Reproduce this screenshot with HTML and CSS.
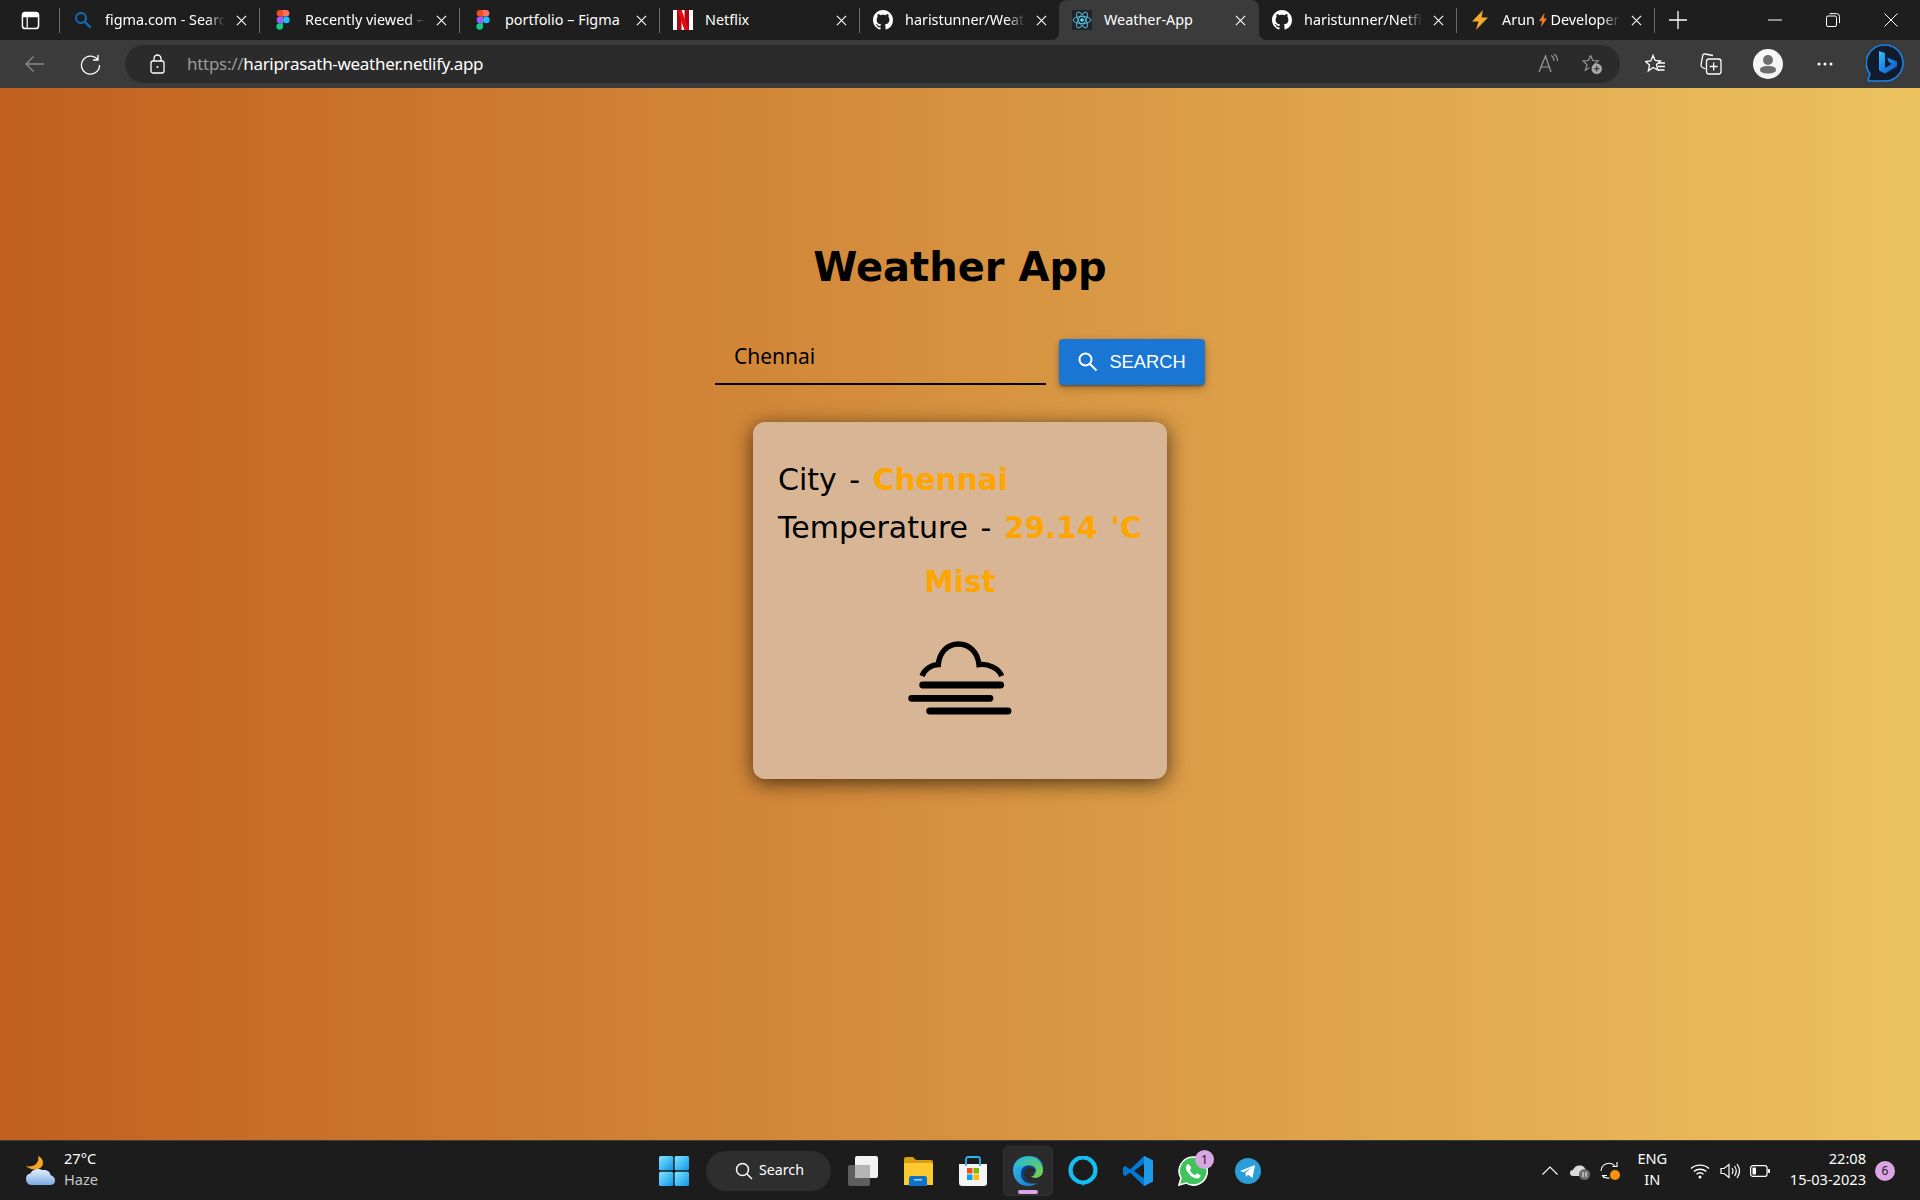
FILE: index.html
```html
<!DOCTYPE html>
<html lang="en">
<head>
<meta charset="utf-8">
<title>Weather-App</title>
<link rel="stylesheet" href="styles.css">
</head>
<body>
<header class="browser">
  <div class="tabstrip">
    <div class="strip-start">
      <svg class="ico-sidebar" viewBox="0 0 20 20"><rect x="1.5" y="1.5" width="17" height="17" rx="3" fill="none" stroke="#fff" stroke-width="1.6"/><path d="M2 6h16V4.500a2.500 2.500 0 0 0-2.500-2.500h-11a2.500 2.500 0 0 0-2.500 2.500zM6.500 6v12" fill="#fff" stroke="#fff" stroke-width="1.300"/></svg>
    </div>
    <div class="tab">
      <svg class="fav" viewBox="0 0 20 20"><circle cx="8" cy="8" r="5" fill="none" stroke="#0f6cbd" stroke-width="2"/><path d="M12 12l5 5" stroke="#0f6cbd" stroke-width="2.200" stroke-linecap="round"/></svg>
      <span class="tab-title">figma.com - Search</span>
      <svg class="close" viewBox="0 0 12 12"><path d="M1 1l10 10M11 1L1 11"/></svg>
    </div>
    <div class="tab">
      <svg class="fav" viewBox="0 0 20 20"><path d="M10 0H7a3.300 3.300 0 0 0 0 6.600h3z" fill="#f24e1e"/><path d="M10 0h3a3.300 3.300 0 0 1 0 6.600h-3z" fill="#ff7262"/><path d="M10 6.600H7a3.300 3.300 0 0 0 0 6.600h3z" fill="#a259ff"/><circle cx="13.300" cy="9.900" r="3.300" fill="#1abcfe"/><path d="M7 13.200h3v3.300a3.300 3.300 0 1 1-3-3.300z" fill="#0acf83"/></svg>
      <span class="tab-title">Recently viewed – Figma</span>
      <svg class="close" viewBox="0 0 12 12"><path d="M1 1l10 10M11 1L1 11"/></svg>
    </div>
    <div class="tab">
      <svg class="fav" viewBox="0 0 20 20"><path d="M10 0H7a3.300 3.300 0 0 0 0 6.600h3z" fill="#f24e1e"/><path d="M10 0h3a3.300 3.300 0 0 1 0 6.600h-3z" fill="#ff7262"/><path d="M10 6.600H7a3.300 3.300 0 0 0 0 6.600h3z" fill="#a259ff"/><circle cx="13.300" cy="9.900" r="3.300" fill="#1abcfe"/><path d="M7 13.200h3v3.300a3.300 3.300 0 1 1-3-3.300z" fill="#0acf83"/></svg>
      <span class="tab-title tab-title-full">portfolio – Figma</span>
      <svg class="close" viewBox="0 0 12 12"><path d="M1 1l10 10M11 1L1 11"/></svg>
    </div>
    <div class="tab">
      <svg class="fav" viewBox="0 0 20 20"><rect width="20" height="20" fill="#fff"/><path d="M4 0h4.500v20H4z" fill="#b1060f"/><path d="M11.500 0H16v20h-4.500z" fill="#b1060f"/><path d="M4 0h4.500l7.500 20h-4.500z" fill="#e50914"/></svg>
      <span class="tab-title tab-title-full">Netflix</span>
      <svg class="close" viewBox="0 0 12 12"><path d="M1 1l10 10M11 1L1 11"/></svg>
    </div>
    <div class="tab tab-nosep">
      <svg class="fav" viewBox="0 0 16 16"><path fill="#fff" d="M8 0C3.580 0 0 3.580 0 8c0 3.540 2.290 6.530 5.470 7.590.4.070.55-.17.55-.38 0-.19-.01-.82-.01-1.490-2.010.37-2.530-.49-2.690-.94-.09-.23-.48-.94-.82-1.130-.28-.15-.68-.52-.01-.53.63-.01 1.080.58 1.230.82.72 1.210 1.870.87 2.330.66.070-.52.28-.87.51-1.070-1.780-.2-3.640-.89-3.640-3.950 0-.87.31-1.590.82-2.150-.08-.2-.36-1.020.08-2.120 0 0 .67-.21 2.200.82.64-.18 1.320-.27 2-.27.68 0 1.360.09 2 .27 1.530-1.040 2.200-.82 2.200-.82.44 1.100.16 1.920.08 2.120.51.56.82 1.270.82 2.150 0 3.070-1.870 3.750-3.650 3.950.29.25.54.73.54 1.480 0 1.070-.01 1.930-.01 2.200 0 .21.15.46.55.38A8.013 8.013 0 0 0 16 8c0-4.420-3.580-8-8-8z"/></svg>
      <span class="tab-title">haristunner/Weather-App</span>
      <svg class="close" viewBox="0 0 12 12"><path d="M1 1l10 10M11 1L1 11"/></svg>
    </div>
    <div class="tab tab-active">
      <svg class="fav" viewBox="0 0 20 20"><rect width="20" height="20" rx="1" fill="#20232a"/><g fill="none" stroke="#61dafb" stroke-width=".8"><ellipse cx="10" cy="10" rx="9" ry="3.500"/><ellipse cx="10" cy="10" rx="9" ry="3.500" transform="rotate(60 10 10)"/><ellipse cx="10" cy="10" rx="9" ry="3.500" transform="rotate(120 10 10)"/></g><circle cx="10" cy="10" r="1.800" fill="#61dafb"/></svg>
      <span class="tab-title tab-title-full">Weather-App</span>
      <svg class="close" viewBox="0 0 12 12"><path d="M1 1l10 10M11 1L1 11"/></svg>
    </div>
    <div class="tab">
      <svg class="fav" viewBox="0 0 16 16"><path fill="#fff" d="M8 0C3.580 0 0 3.580 0 8c0 3.540 2.290 6.530 5.470 7.590.4.070.55-.17.55-.38 0-.19-.01-.82-.01-1.490-2.010.37-2.530-.49-2.690-.94-.09-.23-.48-.94-.82-1.130-.28-.15-.68-.52-.01-.53.63-.01 1.080.58 1.230.82.72 1.210 1.870.87 2.330.66.070-.52.28-.87.51-1.070-1.780-.2-3.640-.89-3.640-3.950 0-.87.31-1.590.82-2.150-.08-.2-.36-1.020.08-2.120 0 0 .67-.21 2.200.82.64-.18 1.320-.27 2-.27.68 0 1.360.09 2 .27 1.530-1.040 2.200-.82 2.200-.82.44 1.100.16 1.920.08 2.120.51.56.82 1.270.82 2.150 0 3.070-1.870 3.750-3.650 3.950.29.25.54.73.54 1.480 0 1.070-.01 1.930-.01 2.200 0 .21.15.46.55.38A8.013 8.013 0 0 0 16 8c0-4.420-3.580-8-8-8z"/></svg>
      <span class="tab-title">haristunner/Netflix-Clone</span>
      <svg class="close" viewBox="0 0 12 12"><path d="M1 1l10 10M11 1L1 11"/></svg>
    </div>
    <div class="tab">
      <svg class="fav" viewBox="0 0 20 20"><path d="M13 0L2 11.500h6.500L6 20l12-12.500h-6.500z" fill="#f7a82b"/></svg>
      <span class="tab-title">Arun <svg class="bolt" viewBox="0 0 8 14"><path d="M5.500 0L0 8h3l-1 6 6-8.500H4.800z"/></svg> Developer Portfolio</span>
      <svg class="close" viewBox="0 0 12 12"><path d="M1 1l10 10M11 1L1 11"/></svg>
    </div>
    <svg class="new-tab" viewBox="0 0 18 18"><path d="M9 0v18M0 9h18"/></svg>
    <div class="window-controls">
      <svg class="win-ico" viewBox="0 0 14 14"><path d="M0 7h14"/></svg>
      <svg class="win-ico" viewBox="0 0 14 14"><rect x=".5" y="3" width="10" height="10.500" rx="1.500"/><path d="M3.500 .6h7a3 3 0 0 1 3 3v6.500"/></svg>
      <svg class="win-ico" viewBox="0 0 14 14"><path d="M.5 .5l13 13M13.500 .5l-13 13"/></svg>
    </div>
  </div>
  <div class="toolbar">
    <svg class="tool tool-back" viewBox="0 0 21 18"><path d="M20 9H2M9.500 1.500L2 9l7.500 7.500"/></svg>
    <svg class="tool tool-reload" viewBox="0 0 21 21"><path d="M17.500 5.500A9 9 0 1 0 19.500 11M18 1v5h-5"/></svg>
    <div class="address">
      <svg class="lock" viewBox="0 0 15 20"><rect x="1" y="7" width="13" height="12" rx="2"/><path d="M4 7V4.500a3.500 3.500 0 0 1 7 0V7"/><circle cx="7.500" cy="13" r="1" fill="#fff" stroke="none"/></svg>
      <span class="url"><span class="url-scheme">https://</span>hariprasath-weather.netlify.app</span>
      <span class="address-end">
        <svg class="addr-ico" viewBox="0 0 20 20"><path d="M1 18L7.500 2 13 18M3.500 13h8M13 1.500c2 1 3 3 3 5.500M16 0c2.400 1.600 3.600 4 3.600 7" /></svg>
        <svg class="addr-ico" viewBox="0 0 21 21"><path d="M9 1.500l2.300 5.300 5.700.5-4.300 3.800 1.300 4M9 1.500L6.700 6.800l-5.700.5 4.300 3.800L3.500 17 8 14.300"/><circle cx="15.500" cy="15.500" r="5.500" fill="#a8a8a8" stroke="none"/><path d="M15.500 12.500v6M12.500 15.500h6" stroke="#2b2b2b"/></svg>
      </span>
    </div>
    <svg class="tool tool-star" viewBox="0 0 20 20"><path d="M8 1.500l2.200 5 5.300.5-4 3.500 1.200 5.500L8 13.500 3.300 17l1.200-6-4-3.500 5.300-.5zM13 9h7M13 12.500h7M12.500 16h7"/></svg>
    <svg class="tool tool-coll" viewBox="0 0 22 22"><path d="M13 2.500L5 1a2 2 0 0 0-2.300 1.600L1 12c0 1 .5 2 1.500 2.500l3 1.500"/><rect x="6.500" y="6" width="14.500" height="15" rx="2.500"/><path d="M13.700 9.500v8M9.700 13.500h8"/></svg>
    <div class="profile"><svg class="profile-ico" viewBox="0 0 30 30"><circle cx="15" cy="11" r="5" fill="#6e6e6e"/><path d="M7 21c0-3 3-4 8-4s8 1 8 4c0 2-3 3.500-8 3.500S7 23 7 21z" fill="#6e6e6e"/></svg></div>
    <svg class="tool-dots" viewBox="0 0 16 4"><circle cx="2" cy="2" r="1.500"/><circle cx="8" cy="2" r="1.500"/><circle cx="14" cy="2" r="1.500"/></svg>
    <svg class="bing" viewBox="0 0 38 40"><defs><linearGradient id="bingg" x1="0" y1="0" x2="1" y2="1"><stop offset="0" stop-color="#37bdff"/><stop offset=".5" stop-color="#1a86e8"/><stop offset="1" stop-color="#1b4fbf"/></linearGradient></defs><path d="M19 1a18 18 0 0 1 0 36H3.500c-1 0-1.500-.5-1.200-1.500L4 30A18 18 0 0 1 19 1z" fill="#101c2c" stroke="#1b84e4" stroke-width="1.600"/><path d="M13 7l6 2v15l7-4-3-1.500-2-5 10 4v5l-12 7-6-3z" fill="url(#bingg)"/></svg>
  </div>
</header>

<main class="page">
  <h1 class="title">Weather App</h1>
  <div class="search-row">
    <div class="field"><span class="field-value">Chennai</span></div>
    <button class="search-btn" type="button">
      <svg class="search-ico" viewBox="0 0 20 20"><circle cx="7.500" cy="7.500" r="6"/><path d="M12 12l6.500 6.500"/></svg>
      <span>SEARCH</span>
    </button>
  </div>
  <section class="card">
    <p class="line">City - <b class="hot">Chennai</b></p>
    <p class="line">Temperature - <b class="hot">29.14 'C</b></p>
    <p class="mist hot">Mist</p>
    <svg class="fog" viewBox="500 685 325 235"><path d="M548 796C555 776 575 763 597 762 600 725 625 700 657 700 690 700 715 725 719 762 745 758 778 772 787 796" fill="none" stroke="#000" stroke-width="16"/><path d="M550 823H784M517 863H752M571 901H806" fill="none" stroke="#000" stroke-width="20.500" stroke-linecap="round"/></svg>
  </section>
</main>

<footer class="taskbar">
  <div class="tb-left">
    <svg class="tb-weather" viewBox="0 0 30 30"><defs><linearGradient id="cl" x1="0" y1="0" x2="0" y2="1"><stop offset="0" stop-color="#e6effa"/><stop offset="1" stop-color="#7eaae6"/></linearGradient></defs><path d="M13 0c3 1 5 4 5 7 0 3-2 5-5 6-4 1-9 0-12-3 4 1 8 0 10-2 2-2 3-5 2-8z" fill="#f4a71f"/><path d="M7 29a6 6 0 0 1-1.500-11.800C7 13.500 13 11.500 17 14c5-.5 8 1.500 8.500 5C28.500 20 30 22 30 24.500c0 3-2 4.500-5 4.500z" fill="url(#cl)"/></svg>
    <div class="tb-weather-text"><span class="tb-temp">27°C</span><span class="tb-cond">Haze</span></div>
  </div>
  <div class="tb-center">
    <div class="slot slot-start"><svg class="ico-win" viewBox="0 0 30 30"><defs><linearGradient id="win" x1="0" y1="0" x2="1" y2="1"><stop offset="0" stop-color="#7fe7ff"/><stop offset="1" stop-color="#0f95e8"/></linearGradient></defs><rect width="14.300" height="14.300" rx="1.500" fill="url(#win)"/><rect x="15.700" width="14.300" height="14.300" rx="1.500" fill="url(#win)"/><rect y="15.700" width="14.300" height="14.300" rx="1.500" fill="url(#win)"/><rect x="15.700" y="15.700" width="14.300" height="14.300" rx="1.500" fill="url(#win)"/></svg></div>
    <div class="tb-search"><svg class="tb-search-ico" viewBox="0 0 18 18"><circle cx="7.500" cy="7.500" r="6"/><path d="M12 12l5 5"/></svg><span class="tb-search-label">Search</span></div>
    <div class="slot"><svg class="ico-30" viewBox="0 0 30 30"><rect y="9" width="22" height="21" rx="2" fill="#5e5e5e"/><rect x="7" width="23" height="22" rx="2" fill="#f2f2f2"/><rect x="7" y="9" width="15" height="13" fill="#b5b5b5"/></svg></div>
    <div class="slot"><svg class="ico-30" viewBox="0 0 30 30"><path d="M1 3a2 2 0 0 1 2-2h7l3 3h15a2 2 0 0 1 2 2v4H1z" fill="#d99e0f"/><path d="M1 7h27a2 2 0 0 1 2 2v20H1z" fill="#fdc92f"/><path d="M6 22a2 2 0 0 1 2-2h14a2 2 0 0 1 2 2v8H6z" fill="#0f72c9"/><rect x="11" y="23" width="8" height="1.500" fill="#9fd2f7"/></svg></div>
    <div class="slot"><svg class="ico-30" viewBox="0 0 30 30"><path d="M1 8h28v19a3 3 0 0 1-3 3H4a3 3 0 0 1-3-3z" fill="#f4f4f4"/><path d="M8 10V3a2 2 0 0 1 2-2h10a2 2 0 0 1 2 2v7" fill="none" stroke="#29b6f6" stroke-width="1.800"/><rect x="9" y="12" width="5.500" height="5.500" fill="#f25022"/><rect x="15.500" y="12" width="5.500" height="5.500" fill="#7fba00"/><rect x="9" y="18.500" width="5.500" height="5.500" fill="#00a4ef"/><rect x="15.500" y="18.500" width="5.500" height="5.500" fill="#ffb900"/></svg></div>
    <div class="slot slot-active"><svg class="ico-30" viewBox="0 0 30 30"><defs><linearGradient id="edge" x1="0" y1="0" x2="1" y2="1"><stop offset="0" stop-color="#35c1f1"/><stop offset="1" stop-color="#1470c4"/></linearGradient><linearGradient id="edge2" x1="0" y1="0" x2="1" y2="1"><stop offset="0" stop-color="#1fb8d8"/><stop offset="1" stop-color="#7fd33f"/></linearGradient></defs><path d="M15 0C7 0 0 6 0 14c0 9 6 16 15 16 4 0 7-1 9-3-8 2-16-1-16-9 0-5 4-9 9-9 5 0 6 2.500 6 5 0 2-1.500 3-3 3.500 2 1.500 7 1 9.500-2.500C31 11 30 0 15 0z" fill="url(#edge)"/><path d="M3 8C7 1 15 -1 22 2c5 3 8 8 8 13 0 3-2 5-4 6-3 1.500-6 1-8-.5 2-.5 5-2 5-5 0-3-3-6-8-6-6 0-9 3-12 -1.500z" fill="url(#edge2)"/><path d="M8 17c0-5 4-8 9-7.500 4 .5 6 3 6 5.500-1-2-3-3-6-3-3 0-6 2-6 6 0 4 3 7 8 7.500-6 1.500-11-3-11-8.500z" fill="#0c3f8a"/></svg><span class="active-pill"></span></div>
    <div class="slot"><svg class="ico-30" viewBox="0 0 30 30"><ellipse cx="15" cy="14" rx="12.500" ry="12.500" fill="none" stroke="#16bdf2" stroke-width="4.200"/><path d="M10.500 25l5.500 5v-5z" fill="#16bdf2"/></svg></div>
    <div class="slot"><svg class="ico-30" viewBox="0 0 30 30"><path d="M21 0l9 4.500v21L21 30 7 16.500 2.500 20 0 18.500V11.500L2.500 10 7 13.500z" fill="#0078d4"/><path d="M21 7.500L11 15l10 7.500z" fill="#1c1c1c"/><path d="M21 0l9 4.500v21L21 30z" fill="#1e9be8"/></svg></div>
    <div class="slot slot-badged"><svg class="ico-30" viewBox="0 0 30 30"><path d="M15 1a14 14 0 0 0-12 21L1 29l7.300-1.900A14 14 0 1 0 15 1z" fill="#3fc35b" stroke="#fff" stroke-width="1.600"/><path d="M10.500 8c-1 0-2.500 1.500-2.500 3.500 0 3 2 5.500 4 7.500s4.500 3.500 7 3.500c2.500 0 3.500-2 3.500-3 0-.5-3-2-3.500-2s-1.500 1.500-2 1.500c-1.500 0-5-3.500-5-5 0-.5 1-1 1-2s-1.500-3.500-2.500-3.500z" fill="#fff"/></svg><span class="count-badge">1</span></div>
    <div class="slot"><svg class="ico-tg" viewBox="0 0 26 26"><circle cx="13" cy="13" r="13" fill="#2a9ed8"/><path d="M5 13l15-6-2.500 13-4.500-3.200-2 2-.6-3.800 6-5.500-7.500 4.800z" fill="#fff"/></svg></div>
  </div>
  <div class="tb-tray">
    <svg class="tray-caret" viewBox="0 0 16 9"><path d="M.5 8.500L8 1l7.500 7.500"/></svg>
    <svg class="tray-ico" viewBox="0 0 20 20"><path d="M3 15a3 3 0 0 1 0-6c1-3 4-5 7-4.500 3 0 5 2 5.500 4L11 15z" fill="#d9d9d9"/><circle cx="14.500" cy="13.500" r="5.500" fill="#6b6b6b"/><path d="M13 11v5M16 11v5" stroke="#fff" stroke-width="1"/></svg>
    <svg class="tray-ico tray-sync" viewBox="0 0 20 20"><path d="M1 10a8 8 0 0 1 14-5M17 1v4.500h-4.500M4 17l-1.500-2.500H7M2.500 14.500c1.500 2 4 3 7 2.500" fill="none" stroke="#fff" stroke-width="1.100"/><circle cx="15" cy="14" r="5" fill="#f7930e"/></svg>
    <div class="tray-lang"><span>ENG</span><span>IN</span></div>
    <svg class="tray-ico tray-wifi" viewBox="0 0 20 16"><path d="M1 5.500c5-4.500 13-4.500 18 0M3.800 8.500c3.500-3 9-3 12.500 0M6.500 11.300c2-1.700 5-1.700 7 0" fill="none" stroke="#fff" stroke-width="1.400"/><circle cx="10" cy="14" r="1.500" fill="#fff"/></svg>
    <svg class="tray-ico tray-vol" viewBox="0 0 20 16"><path d="M1 5.500h3L9 1.500v13L4 10.500H1zM12 5c1.300 2 1.300 4 0 6M14.500 3c2.300 3.200 2.300 6.800 0 10M17 1c3.200 4.500 3.200 9.500 0 14" fill="none" stroke="#fff" stroke-width="1.200"/></svg>
    <svg class="tray-ico tray-batt" viewBox="0 0 20 12"><rect x=".6" y=".6" width="16.500" height="10.800" rx="2.500" fill="none" stroke="#fff" stroke-width="1.200"/><rect x="2.500" y="2.500" width="3.500" height="7" rx=".8" fill="#fff"/><rect x="18" y="4" width="2" height="4" rx=".8" fill="#fff"/></svg>
    <div class="tray-clock"><span>22:08</span><span>15-03-2023</span></div>
    <span class="notif">6</span>
  </div>
</footer>
</body>
</html>
```
FILE: styles.css
```css
* { box-sizing: border-box; }
html, body { margin: 0; height: 100%; }
body {
  width: 1920px;
  height: 1200px;
  display: flex;
  flex-direction: column;
  overflow: hidden;
  font-family: "Noto Sans", "Liberation Sans", sans-serif;
  color: #fff;
}
svg { display: block; flex: none; }

/* browser chrome */
.browser { flex: none; height: 88px; display: flex; flex-direction: column; }
.tabstrip { height: 40px; background: #1e1e1e; display: flex; align-items: stretch; position: relative; }
.strip-start { flex: 0 0 60px; display: flex; align-items: center; padding-left: 21px; position: relative; }
.strip-start::after { content: ""; position: absolute; right: 0; top: 8px; height: 25px; width: 1px; background: #6c6c6c; }
.ico-sidebar { width: 19px; height: 19px; }
.tab {
  flex: 0 0 200px;
  min-width: 0;
  display: flex;
  align-items: center;
  padding: 0 13px;
  position: relative;
  font-size: 14.4px;
}
.tab::after { content: ""; position: absolute; right: 0; top: 8px; height: 25px; width: 1px; background: #6c6c6c; }
.tab-nosep::after { display: none; }
.tab-active::after { display: none; }
.tab-active { background: #3b3b3b; border-radius: 8px 8px 0 0; margin-left: -1px; }
.tab-active ~ .tab { flex-basis: 198px; }
.tab-active::before {
  content: ""; position: absolute; left: -8px; bottom: 0; width: 8px; height: 8px;
  background: radial-gradient(circle at 0 0, transparent 8px, #3b3b3b 8.5px);
}
.tab-active + .tab::before {
  content: ""; position: absolute; left: 0; bottom: 0; width: 8px; height: 8px;
  background: radial-gradient(circle at 100% 0, transparent 8px, #3b3b3b 8.5px);
}
.fav { width: 20px; height: 20px; margin-right: 12px; }
.tab-title {
  flex: 1;
  min-width: 0;
  margin-bottom: 2px;
  white-space: nowrap;
  overflow: hidden;
  -webkit-mask-image: linear-gradient(to right, #000 85%, transparent 100%);
  mask-image: linear-gradient(to right, #000 85%, transparent 100%);
}
.tab-title-full { -webkit-mask-image: none; mask-image: none; }
.bolt { display: inline-block; width: 8px; height: 14px; vertical-align: -2px; fill: #f47b20; }
.close { width: 11px; height: 11px; margin-left: 11px; fill: none; stroke: #fff; stroke-width: 1.200; }
.new-tab { width: 18px; height: 18px; margin: 11px 0 0 14px; fill: none; stroke: #fff; stroke-width: 1.300; }
.window-controls { margin-left: auto; display: flex; align-items: center; gap: 44px; padding-right: 22px; }
.win-ico { width: 14px; height: 14px; fill: none; stroke: #fff; stroke-width: 1; }

.toolbar { height: 48px; background: #3b3b3b; display: flex; align-items: center; padding-left: 24px; }
.tool { fill: none; stroke: #fff; stroke-width: 1.300; }
.tool-back { width: 21px; height: 18px; stroke: #8a8a8a; }
.tool-reload { width: 21px; height: 21px; margin-left: 35px; }
.address {
  flex: 0 0 1495px;
  height: 38px;
  margin-left: 24px;
  background: #2b2b2b;
  border-radius: 19px;
  display: flex;
  align-items: center;
  padding: 0 18px 0 25px;
}
.lock { width: 15px; height: 20px; fill: none; stroke: #fff; stroke-width: 1.300; }
.url { margin: 0 0 2px 22px; font-size: 17px; letter-spacing: -.3px; color: #fff; }
.url-scheme { color: #9a9a9a; }
.address-end { margin-left: auto; display: flex; align-items: center; gap: 24px; }
.addr-ico { width: 20px; height: 20px; fill: none; stroke: #9c9c9c; stroke-width: 1.200; }
.tool-star { width: 20px; height: 20px; margin-left: 25px; }
.tool-coll { width: 22px; height: 22px; margin-left: 35px; }
.profile { width: 30px; height: 30px; margin-left: 31px; border-radius: 50%; background: #f5f5f5; overflow: hidden; }
.profile-ico { width: 30px; height: 30px; }
.tool-dots { width: 16px; height: 4px; margin-left: 34px; fill: #fff; }
.bing { width: 38px; height: 40px; margin-left: 33px; }

/* page */
.page {
  flex: 1;
  background: linear-gradient(to right, #c1601f, #ecc25f);
  display: flex;
  flex-direction: column;
  align-items: center;
  color: #000;
}
.title { margin: 155px 0 0; font: bold 40px/1.2 "DejaVu Sans", sans-serif; }
.search-row { margin-top: 48px; display: flex; align-items: flex-end; gap: 13px; }
.field { width: 331px; height: 46px; border-bottom: 2px solid #000; padding: 0 0 0 19px; display: flex; align-items: center; }
.field-value { font-size: 21px; margin-bottom: 11px; }
.search-btn {
  width: 146px;
  height: 46px;
  border: 0;
  border-radius: 4px;
  background: #1976d2;
  color: #fff;
  display: flex;
  align-items: center;
  justify-content: center;
  gap: 11px;
  padding: 0 0 1px;
  font: 500 18.300px "Liberation Sans", Arial, sans-serif;
  box-shadow: 0 3px 1px -2px rgba(0,0,0,.2), 0 2px 2px rgba(0,0,0,.14), 0 1px 5px rgba(0,0,0,.12), 0 4px 10px rgba(0,0,0,.2);
}
.search-ico { width: 20px; height: 20px; fill: none; stroke: #fff; stroke-width: 2; }
.card {
  width: 414px;
  height: 357px;
  margin-top: 37px;
  padding: 34px 25px 0;
  border-radius: 12px;
  background: #d8b595;
  box-shadow: 0 4px 20px rgba(0,0,0,.65);
  font: 30px/48px "DejaVu Sans", sans-serif;
  word-spacing: 3px;
  display: flex;
  flex-direction: column;
}
.line { margin: 0; white-space: nowrap; }
.hot { color: #ffa500; font-weight: bold; font-size: 29.600px; }
.mist { margin: 6px 0 0; text-align: center; }
.fog { width: 108.33px; height: 78.33px; margin: 33px auto 0; }

/* taskbar */
.taskbar {
  flex: none;
  height: 60px;
  background: #1c1c1c;
  border-top: 1px solid #3c3c3c;
  display: flex;
  align-items: center;
  font-size: 14.600px;
}
.tb-left { flex: 0 0 649px; display: flex; align-items: center; padding-left: 25px; gap: 9px; }
.tb-weather { width: 30px; height: 30px; }
.tb-weather-text { display: flex; flex-direction: column; line-height: 21px; padding-bottom: 3px; }
.tb-cond { color: #c8c8c8; }
.tb-center { flex: 0 0 624px; display: flex; align-items: center; gap: 5px; }
.slot { width: 50px; height: 50px; display: flex; align-items: center; justify-content: center; position: relative; border-radius: 5px; border: 1px solid transparent; }
.slot-start { margin-right: 2px; }
.slot-active { background: #2b2b2b; border-color: #333; }
.active-pill { position: absolute; left: 14px; bottom: 1px; width: 20px; height: 4px; border-radius: 2px; background: #d8a6e2; }
.ico-win, .ico-30 { width: 30px; height: 30px; }
.ico-tg { width: 26px; height: 32px; }
.tb-search { width: 125px; height: 40px; margin-right: 2px; border-radius: 20px; background: #2e2e2e; display: flex; align-items: center; padding-left: 29px; gap: 6px; }
.tb-search-label { padding-bottom: 2px; font-size: 14.200px; }
.tb-search-ico { width: 18px; height: 18px; fill: none; stroke: #fff; stroke-width: 1.500; }
.count-badge {
  position: absolute; right: 3px; top: 3px; width: 19px; height: 19px; border-radius: 50%;
  background: #d8a6e2; color: #1c1c1c; font-size: 12px; line-height: 19px; text-align: center;
}
.tb-tray { flex: 1; display: flex; align-items: center; justify-content: flex-end; padding-right: 25px; }
.tray-caret { width: 16px; height: 9px; fill: none; stroke: #fff; stroke-width: 1.100; }
.tray-ico { width: 20px; height: 20px; margin-left: 12px; }
.tray-sync { margin-left: 10px; }
.tray-lang { width: 29px; margin-left: 18px; display: flex; flex-direction: column; align-items: center; line-height: 21px; padding-bottom: 3px; }
.tray-wifi { margin-left: 23px; height: 16px; }
.tray-vol { margin-left: 10px; height: 16px; }
.tray-batt { margin-left: 10px; height: 12px; }
.tray-clock { margin-left: 20px; display: flex; flex-direction: column; align-items: flex-end; line-height: 21px; padding-bottom: 3px; }
.notif { width: 20px; height: 20px; margin-left: 9px; border-radius: 50%; background: #dba4e4; color: #1c1c1c; font-size: 12px; line-height: 20px; text-align: center; }
```
